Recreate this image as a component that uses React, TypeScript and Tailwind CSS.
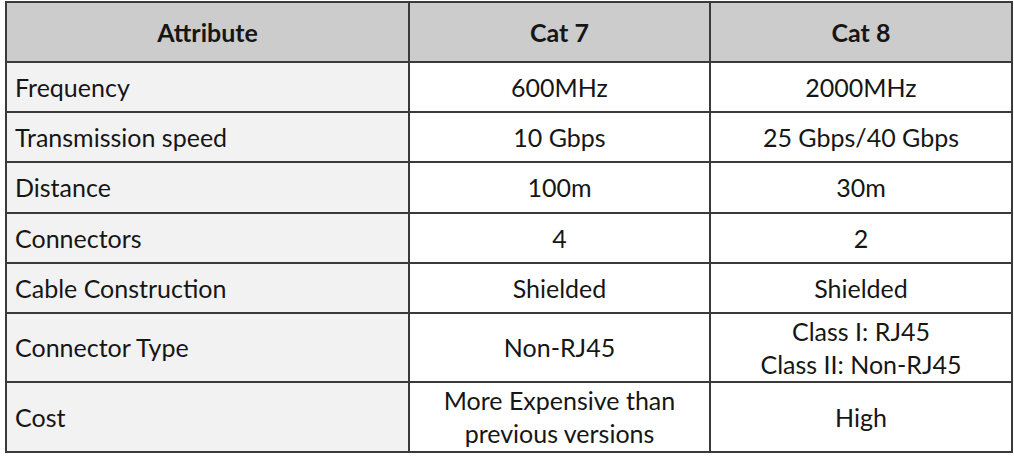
import React from 'react';

interface Row {
  attribute: string;
  cat7: string[];
  cat8: string[];
  height: string;
}

const rows: Row[] = [
  { attribute: 'Frequency', cat7: ['600MHz'], cat8: ['2000MHz'], height: 'h-[50px]' },
  { attribute: 'Transmission speed', cat7: ['10 Gbps'], cat8: ['25 Gbps/40 Gbps'], height: 'h-[50px]' },
  { attribute: 'Distance', cat7: ['100m'], cat8: ['30m'], height: 'h-[51px]' },
  { attribute: 'Connectors', cat7: ['4'], cat8: ['2'], height: 'h-[50px]' },
  { attribute: 'Cable Construction', cat7: ['Shielded'], cat8: ['Shielded'], height: 'h-[50px]' },
  {
    attribute: 'Connector Type',
    cat7: ['Non-RJ45'],
    cat8: ['Class I: RJ45', 'Class II: Non-RJ45'],
    height: 'h-[69px]',
  },
  {
    attribute: 'Cost',
    cat7: ['More Expensive than', 'previous versions'],
    cat8: ['High'],
    height: 'h-[70px]',
  },
];

const cell = 'border-2 border-[#3a3a3a] align-middle';

const App = () => {
  return (
    <div className="w-[1014px] h-[458px] bg-white pt-[1px] pl-[5px] font-['Lato','Open_Sans',sans-serif] text-[25px] leading-[33px] text-[#161616]">
      <table className="w-[1008px] table-fixed border-collapse">
        <colgroup>
          <col className="w-[403px]" />
          <col className="w-[301px]" />
          <col className="w-[302px]" />
        </colgroup>
        <thead>
          <tr className="h-[60px] bg-[#cccccc]">
            <th className={`${cell} text-center font-bold`}>Attribute</th>
            <th className={`${cell} text-center font-bold`}>Cat 7</th>
            <th className={`${cell} text-center font-bold`}>Cat 8</th>
          </tr>
        </thead>
        <tbody>
          {rows.map((row) => (
            <tr key={row.attribute} className={row.height}>
              <td className={`${cell} bg-[#f2f2f2] pl-[8px] text-left`}>{row.attribute}</td>
              <td className={`${cell} bg-white text-center`}>
                {row.cat7.map((line) => (
                  <div key={line}>{line}</div>
                ))}
              </td>
              <td className={`${cell} bg-white text-center`}>
                {row.cat8.map((line) => (
                  <div key={line}>{line}</div>
                ))}
              </td>
            </tr>
          ))}
        </tbody>
      </table>
    </div>
  );
};

export default App;
